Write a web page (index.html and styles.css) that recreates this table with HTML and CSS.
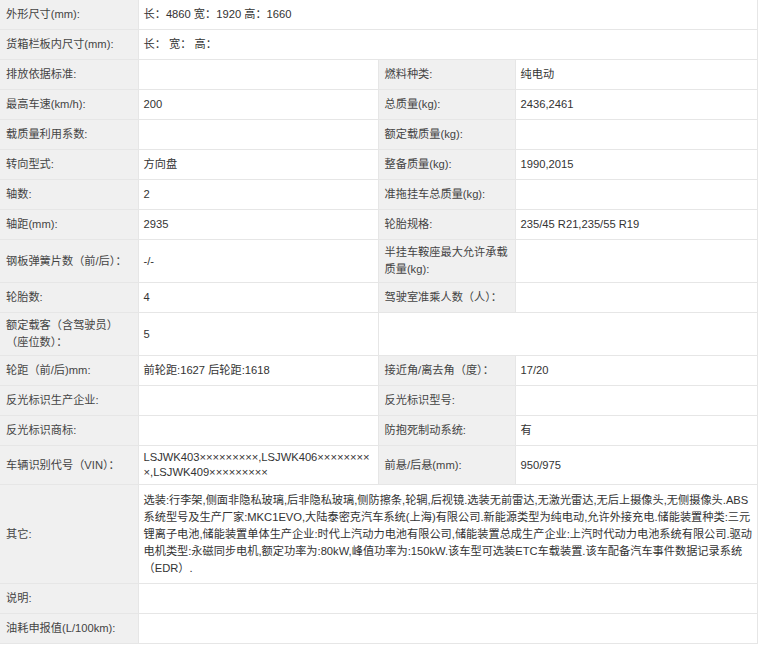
FILE: index.html
```html
<!DOCTYPE html>
<html lang="zh-CN">
<head>
<meta charset="utf-8">
<title>车辆参数</title>
<link rel="stylesheet" href="styles.css">
</head>
<body>
<table class="spec">
  <colgroup>
    <col class="c-label">
    <col class="c-value">
    <col class="c-label2">
    <col class="c-value2">
  </colgroup>
  <tbody>
    <tr><td class="lb">外形尺寸(mm):</td><td class="vl" colspan="3">长：4860 宽：1920 高：1660</td></tr>
    <tr><td class="lb">货箱栏板内尺寸(mm):</td><td class="vl" colspan="3">长：&nbsp;宽：&nbsp;高：</td></tr>
    <tr><td class="lb">排放依据标准:</td><td class="vl"></td><td class="lb">燃料种类:</td><td class="vl">纯电动</td></tr>
    <tr><td class="lb">最高车速(km/h):</td><td class="vl">200</td><td class="lb">总质量(kg):</td><td class="vl">2436,2461</td></tr>
    <tr><td class="lb">载质量利用系数:</td><td class="vl"></td><td class="lb">额定载质量(kg):</td><td class="vl"></td></tr>
    <tr><td class="lb">转向型式:</td><td class="vl">方向盘</td><td class="lb">整备质量(kg):</td><td class="vl">1990,2015</td></tr>
    <tr><td class="lb">轴数:</td><td class="vl">2</td><td class="lb">准拖挂车总质量(kg):</td><td class="vl"></td></tr>
    <tr><td class="lb">轴距(mm):</td><td class="vl">2935</td><td class="lb">轮胎规格:</td><td class="vl">235/45 R21,235/55 R19</td></tr>
    <tr><td class="lb">钢板弹簧片数（前/后）：</td><td class="vl">-/-</td><td class="lb">半挂车鞍座最大允许承载<br>质量(kg):</td><td class="vl"></td></tr>
    <tr><td class="lb">轮胎数:</td><td class="vl">4</td><td class="lb">驾驶室准乘人数（人）：</td><td class="vl"></td></tr>
    <tr><td class="lb">额定载客（含驾驶员）<br>（座位数）：</td><td class="vl">5</td><td class="vl" colspan="2"></td></tr>
    <tr><td class="lb">轮距（前/后)mm:</td><td class="vl">前轮距:1627 后轮距:1618</td><td class="lb">接近角/离去角（度）：</td><td class="vl">17/20</td></tr>
    <tr><td class="lb">反光标识生产企业:</td><td class="vl"></td><td class="lb">反光标识型号:</td><td class="vl"></td></tr>
    <tr><td class="lb">反光标识商标:</td><td class="vl"></td><td class="lb">防抱死制动系统:</td><td class="vl">有</td></tr>
    <tr><td class="lb">车辆识别代号（VIN）：</td><td class="vl vin">LSJWK403×××××××××,LSJWK406××××××××<br>×,LSJWK409×××××××××</td><td class="lb">前悬/后悬(mm):</td><td class="vl">950/975</td></tr>
    <tr><td class="lb">其它:</td><td class="vl other" colspan="3">选装:行李架,侧面非隐私玻璃,后非隐私玻璃,侧防擦条,轮辋,后视镜.选装无前雷达,无激光雷达,无后上摄像头,无侧摄像头.ABS<br>系统型号及生产厂家:MKC1EVO,大陆泰密克汽车系统(上海)有限公司.新能源类型为纯电动,允许外接充电.储能装置种类:三元<br>锂离子电池,储能装置单体生产企业:时代上汽动力电池有限公司,储能装置总成生产企业:上汽时代动力电池系统有限公司.驱动<br>电机类型:永磁同步电机,额定功率为:80kW,峰值功率为:150kW.该车型可选装ETC车载装置.该车配备汽车事件数据记录系统<br>（EDR）.</td></tr>
    <tr><td class="lb">说明:</td><td class="vl" colspan="3"></td></tr>
    <tr><td class="lb">油耗申报值(L/100km):</td><td class="vl" colspan="3"></td></tr>
  </tbody>
</table>
</body>
</html>
```

FILE: styles.css
```css
html, body {
  margin: 0;
  padding: 0;
  background: #ffffff;
}

.spec {
  width: 757px;
  table-layout: fixed;
  border-collapse: collapse;
  font-family: "Liberation Sans", "Noto Sans CJK SC", sans-serif;
  font-size: 11.2px;
  color: #333333;
}

.c-label { width: 138px; }
.c-value { width: 240px; }
.c-label2 { width: 137px; }
.c-value2 { width: 242px; }

.spec td {
  border: 1px solid #e6e6e6;
  padding: 4px 3px 4px 6px;
  line-height: 17px;
  height: 21px;
  vertical-align: middle;
  text-align: left;
  white-space: nowrap;
}

.spec tr:first-child td {
  border-top: none;
}

.spec td:first-child {
  border-left: none;
}

.spec td.lb {
  background: #f0f0f0;
  color: #444444;
}

.spec td.vl {
  background: #ffffff;
  padding-left: 5px;
}

.spec td.vin {
  line-height: 15px;
}

.spec td.other {
  padding-top: 7px;
  padding-bottom: 6px;
}
```
